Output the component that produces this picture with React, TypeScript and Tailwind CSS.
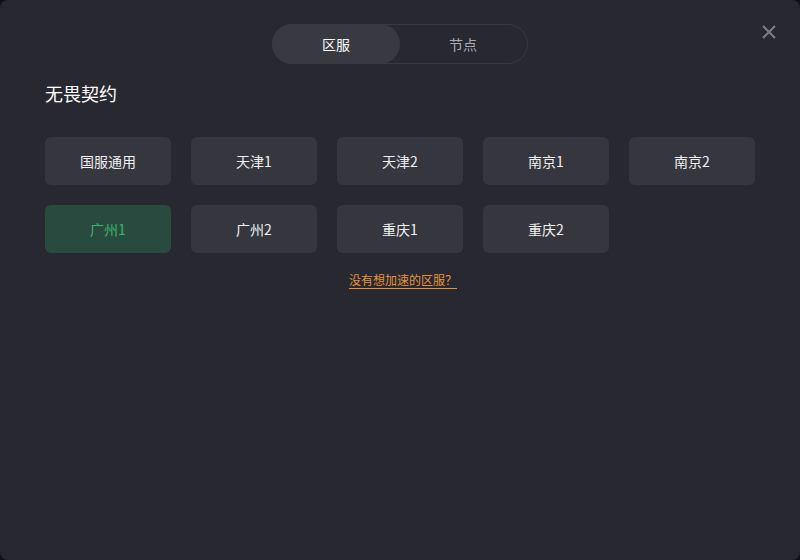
import React from "react";

const rows = [
  ["国服通用", "天津1", "天津2", "南京1", "南京2"],
  ["广州1", "广州2", "重庆1", "重庆2"],
];

export default function App() {
  return (
    <div
      className="w-[800px] h-[560px] bg-[#111114]"
      style={{ fontFamily: '"Noto Sans CJK SC", "Microsoft YaHei", sans-serif' }}
    >
      <div className="relative w-full h-full bg-[#282830] rounded-[8px] flex flex-col">
        <button className="absolute right-[23px] top-[24px] w-[16px] h-[16px] text-[#7c7c84]">
          <svg viewBox="0 0 16 16" width="16" height="16" fill="none" stroke="currentColor" strokeWidth="2">
            <path d="M2 2 L14 14 M14 2 L2 14" />
          </svg>
        </button>
        <div className="flex justify-center pt-[24px]">
          <div className="flex w-[256px] h-[40px] rounded-full border border-[#393941]">
            <div className="w-[128px] -m-px h-[40px] rounded-full bg-[#393941] flex items-center justify-center text-[14px] text-white">
              区服
            </div>
            <div className="flex-1 flex items-center justify-center text-[14px] text-[#a9a9b0]">
              节点
            </div>
          </div>
        </div>
        <div className="pl-[45px] mt-[15px] text-[18px] leading-[28px] text-white">无畏契约</div>
        <div className="pl-[45px] mt-[30px] flex flex-col gap-[20px]">
          {rows.map((r, i) => (
            <div key={i} className="flex gap-[20px]">
              {r.map((name) => {
                const active = name === "广州1";
                return (
                  <div
                    key={name}
                    className={
                      active
                        ? "w-[126px] h-[48px] rounded-[6px] bg-[#294b3f] text-[#3cb46e] flex items-center justify-center text-[14px]"
                        : "w-[126px] h-[48px] rounded-[6px] bg-[#36363e] text-[#f0f0f2] flex items-center justify-center text-[14px]"
                    }
                  >
                    {name}
                  </div>
                );
              })}
            </div>
          ))}
        </div>
        <div className="flex justify-center mt-[18px] pl-[6px]">
          <span className="text-[12px] leading-[18px] text-[#e4933a] underline underline-offset-[3px] cursor-pointer">
            没有想加速的区服？
          </span>
        </div>
      </div>
    </div>
  );
}
